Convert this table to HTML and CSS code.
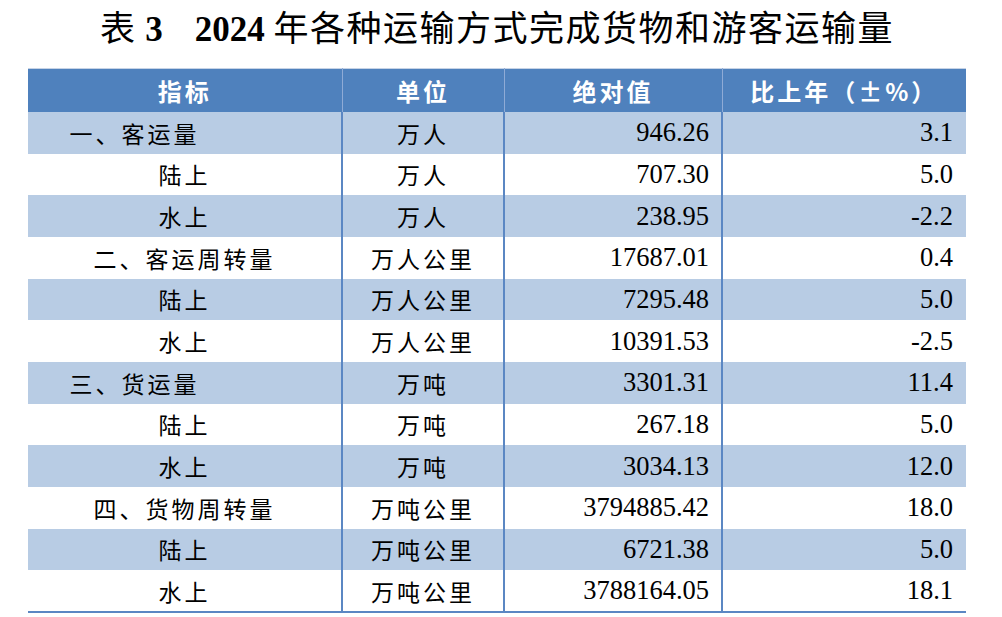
FILE: index.html
```html
<!DOCTYPE html>
<html lang="zh-CN">
<head>
<meta charset="utf-8">
<title>表3 2024年各种运输方式完成货物和游客运输量</title>
<link rel="stylesheet" href="styles.css">
</head>
<body>
<div class="page">
  <h1 class="title"><span class="cjk">表</span> <span class="num">3</span><span class="gap"></span><span class="num">2024</span> <span class="cjk">年各种运输方式完成货物和游客运输量</span></h1>
  <table class="data">
    <colgroup>
      <col class="c1"><col class="c2"><col class="c3"><col class="c4">
    </colgroup>
    <thead>
      <tr><th>指标</th><th>单位</th><th>绝对值</th><th>比上年（±%）</th></tr>
    </thead>
    <tbody>
      <tr class="alt"><td class="name"><span class="lead">一、客运量</span></td><td class="unit">万人</td><td class="val">946.26</td><td class="val">3.1</td></tr>
      <tr><td class="name">陆上</td><td class="unit">万人</td><td class="val">707.30</td><td class="val">5.0</td></tr>
      <tr class="alt"><td class="name">水上</td><td class="unit">万人</td><td class="val">238.95</td><td class="val">-2.2</td></tr>
      <tr><td class="name">二、客运周转量</td><td class="unit">万人公里</td><td class="val">17687.01</td><td class="val">0.4</td></tr>
      <tr class="alt"><td class="name">陆上</td><td class="unit">万人公里</td><td class="val">7295.48</td><td class="val">5.0</td></tr>
      <tr><td class="name">水上</td><td class="unit">万人公里</td><td class="val">10391.53</td><td class="val">-2.5</td></tr>
      <tr class="alt"><td class="name"><span class="lead">三、货运量</span></td><td class="unit">万吨</td><td class="val">3301.31</td><td class="val">11.4</td></tr>
      <tr><td class="name">陆上</td><td class="unit">万吨</td><td class="val">267.18</td><td class="val">5.0</td></tr>
      <tr class="alt"><td class="name">水上</td><td class="unit">万吨</td><td class="val">3034.13</td><td class="val">12.0</td></tr>
      <tr><td class="name">四、货物周转量</td><td class="unit">万吨公里</td><td class="val">3794885.42</td><td class="val">18.0</td></tr>
      <tr class="alt"><td class="name">陆上</td><td class="unit">万吨公里</td><td class="val">6721.38</td><td class="val">5.0</td></tr>
      <tr class="last"><td class="name">水上</td><td class="unit">万吨公里</td><td class="val">3788164.05</td><td class="val">18.1</td></tr>
    </tbody>
  </table>
</div>
</body>
</html>
```

FILE: styles.css
```css
html, body {
  margin: 0;
  padding: 0;
  background: #ffffff;
}

.page {
  width: 938px;
  margin-left: 28px;
}

.title {
  margin: 0;
  height: 68px;
  line-height: normal;
  text-align: center;
  font-weight: normal;
  font-size: 35px;
  color: #000;
  white-space: nowrap;
}

.title .cjk {
  font-family: "Noto Sans CJK SC", sans-serif;
  letter-spacing: 1.5px;
}

.title .num {
  font-family: "Liberation Serif", serif;
  font-weight: bold;
}

.title .gap {
  display: inline-block;
  width: 32px;
}

.data {
  width: 938px;
  border-collapse: collapse;
  table-layout: fixed;
  border-top: 1px solid #c6d3e6;
}

.c1 { width: 314px; }
.c2 { width: 162px; }
.c3 { width: 218px; }
.c4 { width: 244px; }

.data th {
  height: 43px;
  padding: 0;
  background: #4f81bd;
  color: #ffffff;
  font-family: "Noto Sans CJK SC", sans-serif;
  font-weight: bold;
  font-size: 24px;
  letter-spacing: 3px;
  text-align: center;
  vertical-align: middle;
  border-right: 1px solid #8fabd6;
}

.data th:last-child {
  border-right: none;
}

.data tbody tr {
  height: 41.67px;
}

.data tbody tr.alt {
  background: #b8cce4;
}

.data td {
  padding: 0;
  vertical-align: middle;
  color: #000;
  border-right: 2px solid #5b87c3;
}

.data td:last-child {
  border-right: none;
}

.data tr.last td {
  border-bottom: 2px solid #5b87c3;
}

.name, .unit {
  font-family: "Noto Sans CJK SC", sans-serif;
  font-size: 23px;
  letter-spacing: 3px;
  text-align: center;
}

.lead {
  padding-right: 100px;
}

.val {
  font-family: "Liberation Serif", serif;
  font-size: 26.5px;
  text-align: right;
  padding-right: 12px !important;
}

.data td.val:last-child {
  padding-right: 13px !important;
}
```
